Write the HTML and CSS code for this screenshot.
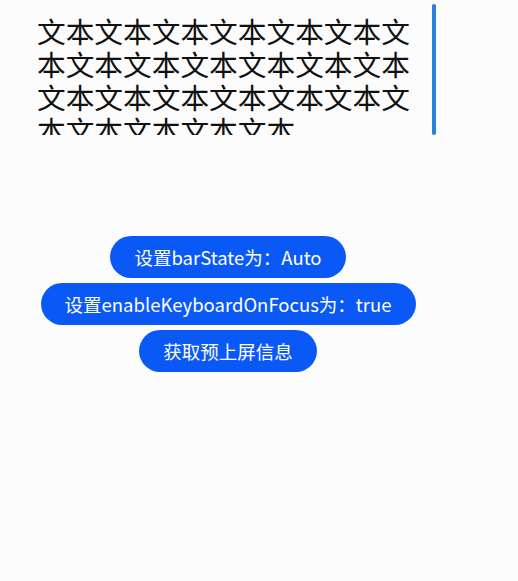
FILE: index.html
```html
<!DOCTYPE html>
<html lang="zh">
<head>
<meta charset="utf-8">
<link rel="stylesheet" href="styles.css">
</head>
<body>
<div class="page">
  <div class="textarea">
    <div class="text">文本文本文本文本文本文本文本文本文本文本文本文本文本文本文本文本文本文本文本文本文本文本文本文本</div>
    <div class="scrollbar"></div>
  </div>
  <div class="buttons">
    <button class="btn">设置barState为：Auto</button>
    <button class="btn">设置enableKeyboardOnFocus为：true</button>
    <button class="btn">获取预上屏信息</button>
  </div>
</div>
</body>
</html>
```
FILE: styles.css
```css
html, body {
  margin: 0;
  padding: 0;
  background: #fcfcfc;
}
body {
  width: 518px;
  height: 581px;
  overflow: hidden;
  font-family: "Noto Sans CJK SC", "Noto Sans", sans-serif;
}
.page {
  width: 456px;
  display: flex;
  flex-direction: column;
  padding-top: 4px;
}
.textarea {
  position: relative;
  margin-left: 21px;
  width: 419px;
  height: 131px;
  box-sizing: border-box;
  padding: 10px 16px 0 16px;
  overflow: hidden;
}
.text {
  font-size: 28.7px;
  line-height: 33px;
  color: #111;
  word-break: break-all;
}
.scrollbar {
  position: absolute;
  top: 0;
  right: 4px;
  width: 4px;
  height: 131px;
  border-radius: 2px;
  background: #2a80dd;
}
.buttons {
  margin-top: 101px;
  display: flex;
  flex-direction: column;
  align-items: center;
  gap: 5px;
}
.btn {
  height: 42px;
  border: none;
  border-radius: 21px;
  background: #0a59f7;
  color: #fff;
  font-family: "Noto Sans CJK SC", "Noto Sans", sans-serif;
  font-size: 18.5px;
  font-weight: 400;
  padding: 0 24px;
  line-height: 42px;
}
```
